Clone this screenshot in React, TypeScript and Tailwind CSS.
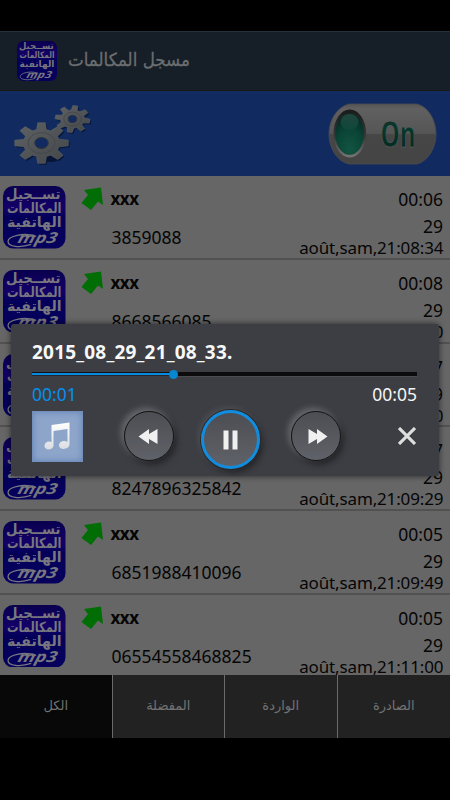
import React from "react";

const rows = [
  { number: "3859088", duration: "00:06", date: "août,sam,21:08:34" },
  { number: "8668566085", duration: "00:08", date: "août,sam,21:08:50" },
  { number: "8247896325", duration: "00:07", date: "août,sam,21:09:10" },
  { number: "8247896325842", duration: "00:07", date: "août,sam,21:09:29" },
  { number: "6851988410096", duration: "00:05", date: "août,sam,21:09:49" },
  { number: "06554558468825", duration: "00:05", date: "août,sam,21:11:00" },
];

const tabs = [
  { label: "الكل", active: true },
  { label: "المفضلة", active: false },
  { label: "الواردة", active: false },
  { label: "الصادرة", active: false },
];

function AppBadge({ className }: { className: string }) {
  return (
    <svg viewBox="0 0 62 62" className={className}>
      <defs>
        <linearGradient id="badge" x1="0" y1="0" x2="0" y2="1">
          <stop offset="0" stopColor="#09004f" />
          <stop offset="0.35" stopColor="#130068" />
          <stop offset="0.5" stopColor="#04005a" />
          <stop offset="1" stopColor="#06005c" />
        </linearGradient>
      </defs>
      <rect width="62" height="62" rx="10" fill="url(#badge)" />
      <g fill="#77777f" fontFamily="'DejaVu Sans', sans-serif" fontWeight="700" textAnchor="middle" direction="rtl">
        <text transform="translate(30 12.5) scale(.94 1)" fontSize="14">تســجيل</text>
        <text transform="translate(31 26.5) scale(.81 1)" fontSize="14">المكالمات</text>
        <text transform="translate(31 41) scale(1 1)" fontSize="14">الهاتفية</text>
      </g>
      <text transform="translate(14 57) scale(1.25 1) skewX(-12)" fontSize="15" fontStyle="italic" fontWeight="700" fontFamily="'Open Sans', sans-serif" fill="#77777f">mp3</text>
      <path d="M33 50C20 45.5 5 50 5 55C5 60.5 17 61.5 28 58" fill="none" stroke="#77777f" strokeWidth="1.3" />
    </svg>
  );
}

function Gear({ cx, cy, r, ry, turn }: { cx: number; cy: number; r: number; ry: number; turn: number }) {
  const points: string[] = [];
  for (let i = 0; i < 8; i++) {
    const profile: [number, number][] = [[-0.27, 0.68], [-0.14, 1], [0.14, 1], [0.27, 0.68]];
    profile.forEach(([offset, radius]) => {
      const a = (i * Math.PI) / 4 + offset + turn;
      points.push(`${cx + Math.cos(a) * r * radius},${cy + Math.sin(a) * ry * radius}`);
    });
  }
  const shape = points.join(" ");
  return (
    <g>
      <polygon points={shape} fill="#071536" transform="translate(1.5 1.5)" opacity="0.8" />
      <polygon points={shape} fill="url(#steel)" stroke="#5c6062" strokeWidth="0.6" strokeLinejoin="round" />
      <ellipse cx={cx} cy={cy} rx={r * 0.5} ry={ry * 0.51} fill="none" stroke="#404446" strokeWidth="0.7" />
      <ellipse cx={cx} cy={cy} rx={r * 0.25} ry={ry * 0.27} fill="#112b61" stroke="#303538" strokeWidth="1" />
    </g>
  );
}

function SettingsGears() {
  return (
    <svg viewBox="0 0 80 66" className="h-[66px] w-20">
      <defs>
        <linearGradient id="steel" x1="0" y1="0" x2="1" y2="1">
          <stop offset="0" stopColor="#5f6365" />
          <stop offset="1" stopColor="#434648" />
        </linearGradient>
      </defs>
      <ellipse cx="39" cy="57" rx="9" ry="4" fill="#06102a" opacity="0.8" />
      <Gear cx={60.5} cy={18} r={17.5} ry={13.5} turn={0.16} />
      <Gear cx={29.5} cy={42} r={27} ry={20.5} turn={0} />
    </svg>
  );
}

function OnSwitch() {
  return (
    <svg viewBox="0 0 109 62" className="h-[62px] w-[109px]">
      <defs>
        <linearGradient id="pill" x1="0" y1="0" x2="0" y2="1">
          <stop offset="0" stopColor="#555555" />
          <stop offset="0.08" stopColor="#606060" />
          <stop offset="0.49" stopColor="#555555" />
          <stop offset="0.51" stopColor="#464646" />
          <stop offset="1" stopColor="#444444" />
        </linearGradient>
        <linearGradient id="socket" x1="0" y1="0" x2="0" y2="1">
          <stop offset="0" stopColor="#1b1a1a" />
          <stop offset="0.6" stopColor="#3b3b3b" />
          <stop offset="1" stopColor="#777777" />
        </linearGradient>
        <radialGradient id="lamp" cx="0.5" cy="0.85" r="0.8">
          <stop offset="0" stopColor="#125442" />
          <stop offset="0.6" stopColor="#0a4435" />
          <stop offset="1" stopColor="#062a24" />
        </radialGradient>
        <linearGradient id="lampShine" x1="0" y1="0" x2="0" y2="1">
          <stop offset="0" stopColor="#2f544e" />
          <stop offset="1" stopColor="#114b3d" />
        </linearGradient>
        <linearGradient id="word" x1="0" y1="0" x2="0" y2="1">
          <stop offset="0" stopColor="#262626" />
          <stop offset="0.4" stopColor="#06382d" />
          <stop offset="1" stopColor="#05231c" />
        </linearGradient>
      </defs>
      <path d="M21 1H89C101 4 108 18 108 31C108 45 100 58 89 61H21C8 58 1 44 1 31C1 17 9 4 21 1Z" fill="url(#pill)" stroke="#4b4b4b" strokeWidth="0.8" />
      <ellipse cx="21.8" cy="30.5" rx="16.3" ry="24" fill="url(#socket)" />
      <ellipse cx="21.6" cy="31" rx="14.3" ry="20.8" fill="url(#lamp)" />
      <ellipse cx="21.6" cy="19" rx="9" ry="8" fill="url(#lampShine)" opacity="0.65" />
      <text x="52.5" y="43.5" fontSize="36" fontWeight="700" fontFamily="'Open Sans', sans-serif" fill="url(#word)" stroke="#6a6a6a" strokeWidth="0.5" textLength="35" lengthAdjust="spacingAndGlyphs">On</text>
    </svg>
  );
}

function CallRow({ number, duration, date }: (typeof rows)[number]) {
  return (
    <div className="flex h-[83.75px] shrink-0 items-start border-b-2 border-[#515151] pl-[3px] pr-[7px] text-[17.5px] leading-[22px] text-[#050505]">
      <AppBadge className="mt-[10px] h-[62.5px] w-[62.5px] shrink-0" />
      <svg viewBox="0 0 22 23" className="ml-[15px] mt-[11px] h-[23px] w-[22px] shrink-0">
        <path d="M3 3L20 .5L22 18L17 14.5L10 23L.5 16L7 8Z" fill="#006d05" />
      </svg>
      <div className="ml-2 mt-[12px] flex flex-1 flex-col">
        <span className="text-[17px] font-bold tracking-[-0.5px]">xxx</span>
        <span className="ml-[1px] mt-4 whitespace-nowrap">{number}</span>
      </div>
      <div className="mt-[12px] flex flex-col items-end whitespace-nowrap">
        <span>{duration}</span>
        <span className="mt-[5px]">29</span>
        <span className="mr-[-0.3px] text-[17px] tracking-[-0.15px]">{date}</span>
      </div>
    </div>
  );
}

function RoundButton({ className, children }: { className: string; children: React.ReactNode }) {
  return (
    <div className={`flex items-center justify-center rounded-full bg-linear-to-b from-[#4c4e53] to-[#606269] ${className}`}>
      {children}
    </div>
  );
}

function SkipIcon({ back }: { back?: boolean }) {
  return (
    <svg viewBox="0 0 20 15" className={back ? "mr-[3px] h-[15px] w-5 -scale-x-100" : "ml-[3px] h-[15px] w-5"}>
      <path d="M.5 0L9 5V0L19.5 7.5L9 15V10L.5 15Z" fill="#f0f0f0" />
    </svg>
  );
}

function Player() {
  return (
    <section className="absolute left-[11px] top-[324px] flex h-[152px] w-[428px] flex-col rounded-[3px] bg-[#3d3e43] pl-[21px] pr-[22px] shadow-[0_0_6px_rgba(0,0,0,0.6)]">
      <h2 className="mt-[16px] text-[19px] font-bold leading-6 tracking-[0.2px] text-[#f8f8f8]">2015_08_29_21_08_33.</h2>
      <div className="mt-[7px] flex h-[6px] items-center">
        <div className="h-[4px] w-[142px] border-y border-t-[#111] border-b-[#25282b] bg-[#078be0]" />
        <div className="z-10 -mx-[5px] size-[9px] shrink-0 rounded-full bg-[#0787d2]" />
        <div className="h-[5px] flex-1 border-b border-[#4b4c51] bg-[#0c0c0e]" />
      </div>
      <div className="mt-[5px] flex justify-between text-[17.5px] leading-[24px]">
        <span className="text-[#078eea]">00:01</span>
        <span className="text-[#f5f5f5]">00:05</span>
      </div>
      <div className="mt-[5px] flex items-start">
        <div className="flex size-[51px] items-center justify-center border border-[#7390bd] bg-[#8ea5ca] shadow-[inset_0_0_6px_#6284b6]">
          <svg viewBox="0 0 26 28" className="-ml-[2px] -mt-[2px] h-7 w-[26px]">
            <defs>
              <linearGradient id="note" x1="0" y1="0" x2="0" y2="1">
                <stop offset="0" stopColor="#ffffff" />
                <stop offset="1" stopColor="#d9dde2" />
              </linearGradient>
            </defs>
            <path d="M7.5 3L25.5 .5V22C25.5 28 15 28.5 15 23.5C15 19.5 20 18 23.5 20V7L9.5 9V23C9.5 29 .5 28.5 .5 24C.5 20 4.5 18.5 7.5 20Z" fill="url(#note)" />
          </svg>
        </div>
        <RoundButton className="ml-[41px] size-[50px] border border-[#161616] shadow-[-3px_-3px_6px_rgba(175,175,180,0.38),3px_4px_6px_rgba(0,0,0,0.4)]"><SkipIcon back /></RoundButton>
        <RoundButton className="-mt-[1px] ml-[27px] size-[59px] border-[3px] border-[#118de0] shadow-[0_0_0_1px_#292929,-2px_-2px_6px_rgba(175,175,180,0.2),3px_4px_6px_rgba(0,0,0,0.4)]">
          <svg viewBox="0 0 15 20" className="h-5 w-[15px]"><path d="M.5 .5H5.5V19.5H.5ZM9.5 .5H14.5V19.5H9.5Z" fill="#f0f0f0" /></svg>
        </RoundButton>
        <RoundButton className="ml-[31px] size-[50px] border border-[#161616] shadow-[-3px_-3px_6px_rgba(175,175,180,0.38),3px_4px_6px_rgba(0,0,0,0.4)]"><SkipIcon /></RoundButton>
        <svg viewBox="0 0 18 18" className="ml-auto mr-[1px] mt-4 h-[18px] w-[18px]"><path d="M1 1L17 17M17 1L1 17" stroke="#dedede" strokeWidth="3.1" /></svg>
      </div>
    </section>
  );
}

export default function App() {
  return (
    <main className="relative flex h-[800px] w-[450px] flex-col overflow-hidden bg-black pt-[31px] font-['Noto_Sans','DejaVu_Sans',sans-serif]">
      <header className="flex h-[60px] shrink-0 items-center border-b border-t border-b-[#171c19] border-t-[#26313a] bg-[#161f27] pl-[17px]">
        <AppBadge className="h-10 w-10" />
        <svg viewBox="0 0 124 36" className="ml-[10px] h-9 w-[124px]">
          <text x="62" y="23" textAnchor="middle" direction="rtl" fontSize="18" fontFamily="'DejaVu Sans', sans-serif" fill="#6b6e70" stroke="#6b6e70" strokeWidth="0.3" textLength="122" lengthAdjust="spacingAndGlyphs">مسجل المكالمات</text>
        </svg>
      </header>
      <div className="flex h-[85px] shrink-0 items-center justify-between bg-[#112b61] pl-3 pr-[13px]">
        <SettingsGears />
        <OnSwitch />
      </div>
      <div className="flex h-[499px] shrink-0 flex-col overflow-hidden bg-[#666666]">
        {rows.map((row) => <CallRow key={row.date} {...row} />)}
      </div>
      <nav className="grid h-[63px] shrink-0 grid-cols-4 bg-[#222222]">
        {tabs.map((tab) => (
          <div key={tab.label} className={`flex items-center justify-center border-r border-[#6b6b6b] pb-px text-[13px] font-medium text-[#727272] last:border-r-0 ${tab.active ? "bg-[#080808]" : "bg-[#222222]"}`} dir="rtl">{tab.label}</div>
        ))}
      </nav>
      <Player />
    </main>
  );
}
